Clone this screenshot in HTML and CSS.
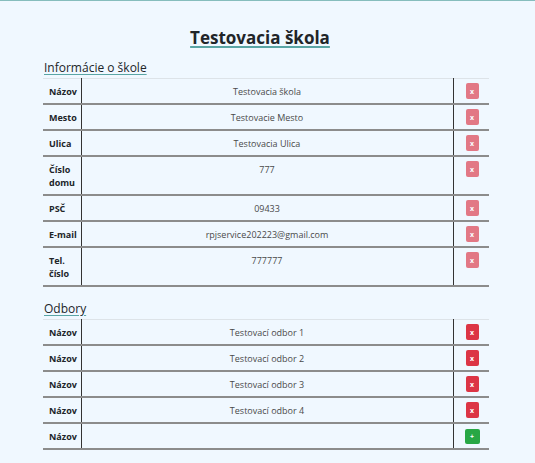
FILE: index.html
```html
<!DOCTYPE html>
<html lang="sk">
<head>
<meta charset="utf-8">
<title>Testovacia škola</title>
<link rel="stylesheet" href="styles.css">
</head>
<body>
<div class="page">
  <h1 class="title">Testovacia škola</h1>

  <h2 class="section">Informácie o škole</h2>
  <table class="grid">
    <colgroup><col class="c-label"><col class="c-value"><col class="c-action"></colgroup>
    <tbody>
      <tr><th>Názov</th><td class="val">Testovacia škola</td><td class="act"><button class="btn btn-del muted">x</button></td></tr>
      <tr><th>Mesto</th><td class="val">Testovacie Mesto</td><td class="act"><button class="btn btn-del muted">x</button></td></tr>
      <tr><th>Ulica</th><td class="val">Testovacia Ulica</td><td class="act"><button class="btn btn-del muted">x</button></td></tr>
      <tr><th>Číslo domu</th><td class="val">777</td><td class="act"><button class="btn btn-del muted">x</button></td></tr>
      <tr><th>PSČ</th><td class="val">09433</td><td class="act"><button class="btn btn-del muted">x</button></td></tr>
      <tr><th class="nowrap">E-mail</th><td class="val">rpjservice202223@gmail.com</td><td class="act"><button class="btn btn-del muted">x</button></td></tr>
      <tr><th>Tel. číslo</th><td class="val">777777</td><td class="act"><button class="btn btn-del muted">x</button></td></tr>
    </tbody>
  </table>

  <h2 class="section section-2">Odbory</h2>
  <table class="grid">
    <colgroup><col class="c-label"><col class="c-value"><col class="c-action"></colgroup>
    <tbody>
      <tr><th>Názov</th><td class="val">Testovací odbor 1</td><td class="act"><button class="btn btn-del">x</button></td></tr>
      <tr><th>Názov</th><td class="val">Testovací odbor 2</td><td class="act"><button class="btn btn-del">x</button></td></tr>
      <tr><th>Názov</th><td class="val">Testovací odbor 3</td><td class="act"><button class="btn btn-del">x</button></td></tr>
      <tr><th>Názov</th><td class="val">Testovací odbor 4</td><td class="act"><button class="btn btn-del">x</button></td></tr>
      <tr><th>Názov</th><td class="val"></td><td class="act"><button class="btn btn-add">+</button></td></tr>
    </tbody>
  </table>
</div>
</body>
</html>
```

FILE: styles.css
```css
html, body {
  margin: 0;
  padding: 0;
}
body {
  background: #f0f8ff;
  border-top: 1px solid #86bdbd;
  font-family: "Open Sans", "Noto Sans", sans-serif;
  color: #212529;
  min-height: 462px;
}
.page {
  width: 446px;
  margin-left: 43px;
  padding-top: 24px;
}
.title {
  margin: 0 0 8px;
  padding-right: 12px;
  text-align: center;
  font-size: 17px;
  line-height: 26px;
  font-weight: 700;
  text-decoration: underline;
  text-decoration-color: #5aa5a5;
  text-decoration-thickness: 2px;
  text-underline-offset: 2px;
}
.section {
  margin: 0 0 1px 1px;
  font-size: 12px;
  line-height: 18px;
  font-weight: 400;
  text-decoration: underline;
  text-decoration-color: #5aa5a5;
  text-underline-offset: 2px;
}
.section-2 {
  margin-top: 13px;
}
.grid {
  width: 446px;
  border-collapse: collapse;
  table-layout: fixed;
  border-top: 1px solid #dde3e8;
  font-size: 9px;
  line-height: 13px;
}
.c-label { width: 38px; }
.c-action { width: 36px; }
.grid tr {
  border-bottom: 2px solid #8c8c8c;
}
.grid th, .grid td {
  padding: 6px 6px 5px;
  vertical-align: top;
}
.grid th {
  padding-right: 1px;
  text-align: left;
  font-weight: 700;
  border-right: 1px solid #333;
}
.grid th.nowrap {
  white-space: nowrap;
}
.grid td.val {
  text-align: center;
  color: #4a4a4a;
  border-right: 1px solid #333;
}
.grid td.act {
  padding: 4px 0 0 12px;
}
.btn {
  display: block;
  width: 13px;
  height: 16px;
  padding: 0;
  border: 0;
  border-radius: 2px;
  color: #fff;
  font-family: "Open Sans", sans-serif;
  font-size: 7px;
  font-weight: 700;
  line-height: 15px;
  text-align: center;
}
.btn-del {
  background: #dc3545;
}
.btn-del.muted {
  opacity: 0.65;
}
.btn-add {
  background: #28a745;
  width: 15px;
  height: 15px;
  margin-left: -1px;
  margin-top: 1px;
}
```
